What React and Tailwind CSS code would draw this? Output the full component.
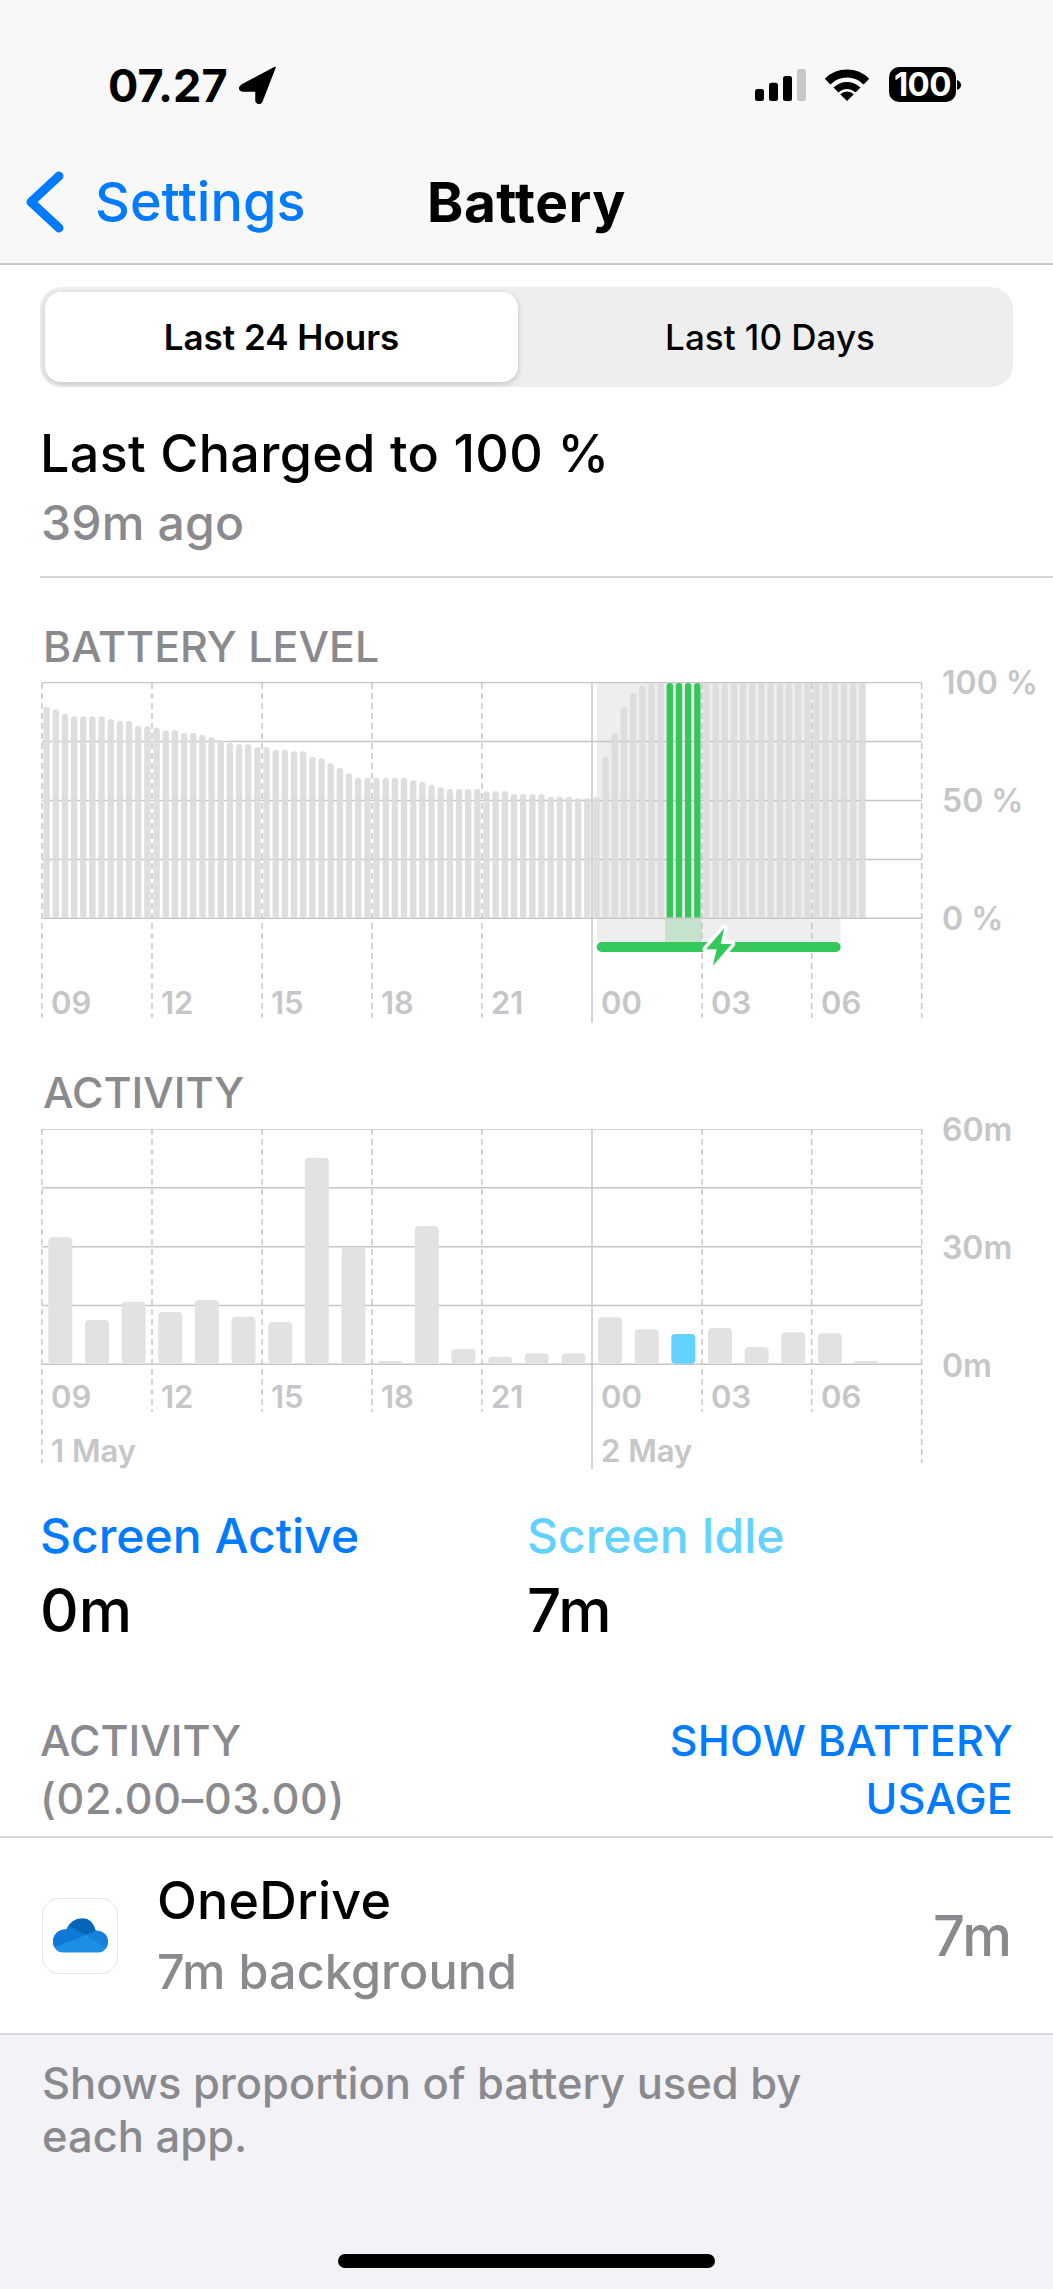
const FONT = { fontFamily: 'Inter, "Liberation Sans", sans-serif' };

const batteryTops = [320,328,341,349,349,349,349,357,362,362,378,378,383,391,391,399,399,404,412,420,428,433,433,441,441,449,449,454,454,470,475,490,503,520,533,533,533,533,533,533,541,546,554,562,567,567,567,567,574,574,574,582,582,582,582,590,590,590,595,595,590,470,400,320,278,257,248,248,248,248,248,248,248,248,248,248,248,248,248,248,248,248,248,248,248,248,248,248,248,248];
const activityTops = [562,810,755,786,750,800,816,323,592,933,528,897,920,910,910,802,838,852,834,891,847,850,933];
const dashX = [42, 152, 262, 372, 482, 702, 811.7, 921.7];

function Hlines({ ys }) {
  return ys.map((y) => <line key={y} x1="42" x2="922" y1={y} y2={y} stroke="#c6c6c8" strokeWidth="1.5" />);
}

function BatterySvg() {
  const base = 917.6;
  return (
    <svg className="absolute inset-0" width="1053" height="341" viewBox="0 682 1053 341">
      <rect x="596.7" y="683" width="269" height="235" fill="#eeeeee" />
      <rect x="596.7" y="918" width="244" height="24" fill="#eeeeee" />
      <rect x="665" y="918" width="36.7" height="24" fill="#c6e2cd" />
      <Hlines ys={[682.4, 741.6, 800.4, 859.4, 918.3]} />
      {batteryTops.map((t, i) => {
        const x = 46.6 + 9.165 * i - 3.2;
        const y = Math.max(683, 600 + t / 3);
        const green = i >= 68 && i <= 71;
        return <path key={i} d={`M${x} ${base}V${y + 3.2}a3.2 3.2 0 0 1 6.4 0V${base}Z`} fill={green ? '#34c759' : '#dbdbdb'} fillOpacity={green ? 1 : 0.92} />;
      })}
      {dashX.map((x) => <line key={x} x1={x} x2={x} y1="683" y2="1018" stroke="#c6c6c8" strokeWidth="1.5" strokeDasharray="6 4" />)}
      <line x1="592" x2="592" y1="683" y2="1023" stroke="#c6c6c8" strokeWidth="1.5" />
      <rect x="596.7" y="942" width="244" height="10" rx="5" fill="#34c759" />
      <path d="M724.3 928.3L706 949.3H716.7L712.7 966L731.7 944H720.7Z" fill="#34c759" stroke="#ffffff" strokeWidth="7" strokeLinejoin="round" paintOrder="stroke" />
    </svg>
  );
}

function ActivitySvg() {
  return (
    <svg className="absolute inset-0" width="1053" height="340" viewBox="0 1129 1053 340">
      <Hlines ys={[1129, 1187.7, 1246.7, 1305.4, 1364.3]} />
      {[42, 152, 262, 372, 482, 702, 811.7].map((x, i) => <line key={x} x1={x} x2={x} y1="1129" y2={i === 0 ? 1463 : 1412} stroke="#c6c6c8" strokeWidth="1.5" strokeDasharray="6 4" />)}
      <line x1="921.7" x2="921.7" y1="1129" y2="1463" stroke="#c6c6c8" strokeWidth="1.5" strokeDasharray="6 4" />
      <line x1="592" x2="592" y1="1129" y2="1469" stroke="#c6c6c8" strokeWidth="1.5" />
      {activityTops.map((t, i) => {
        const x = 48.3 + 36.65 * i;
        const y = 1050 + t / 3;
        const h = 1363.8 - y;
        return <rect key={i} x={x} y={y} width="24" height={h} rx={Math.min(4, h / 2)} fill={i === 17 ? '#64d2ff' : '#e2e2e2'} />;
      })}
    </svg>
  );
}

function AxisLabels({ pt, labels, ys, extra }) {
  return (
    <div className="relative flex h-full">
      <div className="ml-[42px] w-[880px] shrink-0" style={{ paddingTop: pt }}>
        <div className="flex">
          {labels.map((l, i) => (
            <div key={i} className="w-[110px] shrink-0 pl-[9px] text-[31px] leading-[40px] font-semibold text-[#c6c6c8]">{l}</div>
          ))}
        </div>
        {extra}
      </div>
      <div className="-mt-[19px] ml-[20px] flex flex-col gap-[78px] text-[32px] leading-[40px] font-semibold whitespace-nowrap text-[#c6c6c8]">
        {ys.map((y) => <div key={y}>{y}</div>)}
      </div>
    </div>
  );
}

function StatusIcons() {
  return (
    <svg width="210" height="40" viewBox="755 65 210 40" className="block">
      <rect x="755" y="89" width="9" height="12" rx="2.5" fill="#000" />
      <rect x="769" y="82.7" width="9" height="18.3" rx="2.5" fill="#000" />
      <rect x="783" y="76" width="9" height="25" rx="2.5" fill="#000" />
      <rect x="797" y="69" width="9" height="32" rx="2.5" fill="#c7c7c7" />
      <path d="M827.6 81.6A27.5 27.5 0 0 1 866.4 81.6" fill="none" stroke="#000" strokeWidth="8" />
      <path d="M836 90A15.5 15.5 0 0 1 858 90" fill="none" stroke="#000" strokeWidth="7" />
      <path d="M847 101L840.2 94.2A9.6 9.6 0 0 1 853.8 94.2Z" fill="#000" />
      <path d="M957 80C960 81 961 83 961 85C961 87 960 89 957 90Z" fill="#000" />
    </svg>
  );
}

function OneDriveLogo() {
  return (
    <svg width="55" height="35" viewBox="0 0 165 104">
      <defs>
        <clipPath id="odc">
          <path d="M34 104C12 104 0 88 0 70C0 48 18 32 40 34C50 12 68 0 88 0C108 0 122 14 128 38C150 36 165 52 165 70C165 90 150 104 135 104Z" />
        </clipPath>
      </defs>
      <g clipPath="url(#odc)">
        <rect width="165" height="104" fill="#1c8fe4" />
        <path d="M0 0H40V21L100 50L10 86L0 86Z" fill="#0f78d4" />
        <path d="M40 21L30 0H135V38L100 50Z" fill="#0364b8" />
        <path d="M100 50L128 38L170 30V96L160 92Z" fill="#1581dc" />
      </g>
    </svg>
  );
}

export default function App() {
  return (
    <div style={FONT} className="h-[2289px] w-[1053px] overflow-hidden bg-white text-black">
      <header className="h-[265px] border-b-2 border-[#c9c9cb] bg-[#f8f8f8]">
        <div className="flex h-[172px] items-start">
          <div className="mt-[59px] ml-[108px] flex items-center gap-[11px]">
            <span className="text-[45px] leading-[54px] font-bold">07.27</span>
            <svg width="38" height="38" viewBox="238 68 38 38" className="-mt-[2px]">
              <path d="M274 69.5L241 87Q236 91 241.5 93L255 93L255 103Q258 108 261 103Z" fill="#000" stroke="#000" strokeWidth="1.5" strokeLinejoin="round" />
            </svg>
          </div>
          <div className="relative mt-[2px] mr-[88px] ml-auto flex">
            <div className="mt-[63px]"><StatusIcons /></div>
            <div className="absolute top-[65px] left-[134px] flex h-[35px] w-[67px] items-center justify-center rounded-[10px] bg-black text-[33px] font-bold tracking-[-0.5px] text-white">100</div>
          </div>
        </div>
        <nav className="flex h-[60px] items-center text-[#007aff]">
          <svg width="40" height="66" viewBox="0 0 40 66" className="ml-[25px] shrink-0">
            <path d="M34 7L6 33L34 59" fill="none" stroke="#007aff" strokeWidth="9" strokeLinecap="round" strokeLinejoin="round" />
          </svg>
          <span className="ml-[30px] w-[332px] shrink-0 text-[54px] leading-[60px] font-medium">Settings</span>
          <span className="text-[55px] leading-[60px] font-bold tracking-[0.5px] text-black">Battery</span>
        </nav>
      </header>

      <main>
        <div className="mx-[40px] mt-[22px] flex h-[100px] rounded-[22px] bg-[#eeeeef] p-[5px]">
          <div className="flex w-[473px] items-center justify-center rounded-[16px] bg-white text-[35px] font-semibold shadow-[0_2px_6px_rgba(0,0,0,0.18)]">Last 24 Hours</div>
          <div className="flex flex-1 items-center justify-center pl-[14px] text-[35px] font-medium">Last 10 Days</div>
        </div>

        <h1 className="mt-[37px] ml-[40px] text-[52px] leading-[60px] font-medium tracking-[0.35px]">Last Charged to 100 %</h1>
        <p className="mt-[14px] ml-[41px] text-[48px] leading-[50px] font-medium tracking-[0.2px] text-[#8a8a8e]">39m ago</p>
        <div className="mt-[28px] ml-[40px] h-[2px] bg-[#d8d8da]" />

        <h2 className="mt-[43px] ml-[43px] text-[43px] leading-[50px] font-medium text-[#8a8a8e]">BATTERY LEVEL</h2>
        <div className="relative mt-[11px] h-[341px]">
          <BatterySvg />
          <AxisLabels pt={301} labels={['09', '12', '15', '18', '21', '00', '03', '06']} ys={['100 %', '50 %', '0 %']} />
        </div>

        <h2 className="mt-[44px] ml-[43px] text-[43px] leading-[50px] font-medium text-[#8a8a8e]">ACTIVITY</h2>
        <div className="relative mt-[12px] h-[340px]">
          <ActivitySvg />
          <AxisLabels
            pt={248}
            labels={['09', '12', '15', '18', '21', '00', '03', '06']}
            ys={['60m', '30m', '0m']}
            extra={
              <div className="mt-[14px] flex text-[31px] leading-[40px] font-semibold text-[#c6c6c8]">
                <div className="w-[550px] pl-[9px]">1 May</div>
                <div className="pl-[9px]">2 May</div>
              </div>
            }
          />
        </div>

        <div className="mt-[37px] ml-[40px] flex">
          <div className="w-[487px]">
            <div className="text-[48px] leading-[60px] font-medium text-[#007aff]">Screen Active</div>
            <div className="mt-[9px] text-[60px] leading-[70px] font-medium">0m</div>
          </div>
          <div>
            <div className="text-[48px] leading-[60px] font-medium text-[#64d2ff]">Screen Idle</div>
            <div className="mt-[9px] text-[60px] leading-[70px] font-medium">7m</div>
          </div>
        </div>

        <div className="mx-[40px] mt-[67px] flex justify-between text-[43px] leading-[57.5px] font-medium">
          <div className="text-[#8a8a8e]">ACTIVITY<br /><span className="tracking-[0.7px]">(02.00–03.00)</span></div>
          <div className="text-right tracking-[0.2px] text-[#007aff]">SHOW BATTERY<br />USAGE</div>
        </div>

        <div className="mt-[9px] flex h-[199px] items-center border-y-2 border-[#d8d8da]">
          <div className="ml-[42px] flex h-[76px] w-[76px] shrink-0 items-center justify-center rounded-[17px] border border-[#e5e5e5] bg-white">
            <OneDriveLogo />
          </div>
          <div className="ml-[39px] flex-1">
            <div className="text-[52px] leading-[60px] font-medium tracking-[0.2px]">OneDrive</div>
            <div className="mt-[12px] text-[48.5px] leading-[58px] font-medium tracking-[0.1px] text-[#8a8a8e]">7m background</div>
          </div>
          <div className="mr-[41px] text-[56px] font-medium text-[#8a8a8e]">7m</div>
        </div>

        <footer className="h-[254px] bg-[#f2f2f7] pt-[22px] pl-[42px]">
          <p className="text-[43.5px] leading-[53px] font-medium text-[#8a8a8e]">Shows proportion of battery used by<br />each app.</p>
          <div className="mt-[91px] ml-[296px] h-[14px] w-[377px] rounded-full bg-black" />
        </footer>
      </main>
    </div>
  );
}
